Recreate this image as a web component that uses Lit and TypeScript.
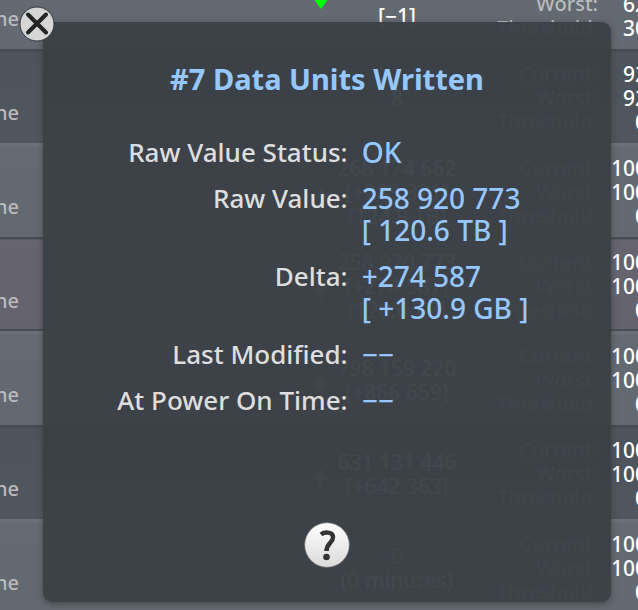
import { LitElement, html, svg, css, nothing } from "lit";
import { customElement, property } from "lit/decorators.js";

interface Attribute {
  tone: "light" | "dark" | "selected";
  raw: string[];
  trend?: "up" | "down";
  current: string;
  worst: string;
  threshold: string;
}

const ATTRIBUTES: Attribute[] = [
  { tone: "light", raw: ["36", "[−1]"], trend: "down", current: "64", worst: "62", threshold: "30" },
  { tone: "dark", raw: ["8"], current: "92", worst: "92", threshold: "0" },
  { tone: "light", raw: ["268 174 662", "[+283 321]", "(124.9 TB)"], trend: "up", current: "100", worst: "100", threshold: "0" },
  { tone: "selected", raw: ["258 920 773", "[+274 587]", "(120.6 TB)"], trend: "up", current: "100", worst: "100", threshold: "0" },
  { tone: "light", raw: ["798 159 220", "[+866 659]"], trend: "up", current: "100", worst: "100", threshold: "0" },
  { tone: "dark", raw: ["631 131 446", "[+642 363]"], trend: "up", current: "100", worst: "100", threshold: "0" },
  { tone: "light", raw: ["0", "(0 minutes)"], current: "100", worst: "100", threshold: "0" },
];

const DETAILS: { label: string; value: string[] }[] = [
  { label: "Raw Value Status:", value: ["OK"] },
  { label: "Raw Value:", value: ["258 920 773", "[ 120.6 TB ]"] },
  { label: "Delta:", value: ["+274 587", "[ +130.9 GB ]"] },
  { label: "Last Modified:", value: ["−−"] },
  { label: "At Power On Time:", value: ["−−"] },
];

@customElement("attribute-table")
export class AttributeTable extends LitElement {
  static styles = css`
    :host {
      display: block;
      color: #fff;
      font: 500 20px/24px "Noto Sans", "Open Sans", sans-serif;
    }
    table,
    tbody {
      display: block;
    }
    tr {
      display: grid;
      grid-template-columns: 19px 1fr 16px 136px 133px 49px;
      align-items: center;
      box-sizing: border-box;
      min-height: 94px;
      padding-top: 3px;
      margin-right: -9px;
    }
    td {
      padding: 0;
      white-space: nowrap;
    }
    .light {
      background: linear-gradient(#6b7177 0 3px, #646a71 4px, #636970);
    }
    .dark {
      background: linear-gradient(#474c53 0 2px, #4e545b 3px, #50565d);
    }
    .selected {
      background: linear-gradient(#484d54 0 2px, #66646f 3px, #64626d 92px, #484d54 92px);
    }
    .mode {
      display: flex;
      justify-content: flex-end;
      padding-top: 30px;
      color: #b9bbbc;
    }
    .trend {
      grid-column: 3;
      height: 30px;
      display: flex;
      color: #c0c0c0;
    }
    .trend.up {
      align-items: flex-end;
    }
    .trend.down {
      color: #00ff00;
    }
    .raw {
      text-align: center;
      font-size: 21px;
    }
    .labels {
      text-align: right;
      color: #b9bbbc;
    }
    .values {
      text-align: right;
      font-size: 21px;
    }
    .line {
      display: block;
    }
  `;

  private arrow(direction: "up" | "down") {
    const path = direction === "up" ? "M8 0L16 11H10V20H6V11H0Z" : "M8 20L16 9H10V0H6V9H0Z";
    return html`<svg width="16" height="20" viewBox="0 0 16 20" aria-label=${direction}>
      ${svg`<path d=${path} fill="currentColor" />`}
    </svg>`;
  }

  render() {
    return html`<table>
      <tbody>
        ${ATTRIBUTES.map(
          (a) => html`<tr class=${a.tone}>
            <td class="mode">Online</td>
            <td class="trend ${a.trend ?? ""}">${a.trend ? this.arrow(a.trend) : nothing}</td>
            <td class="raw">${a.raw.map((t) => html`<span class="line">${t}</span>`)}</td>
            <td class="labels">
              <span class="line">Current:</span><span class="line">Worst:</span
              ><span class="line">Threshold:</span>
            </td>
            <td class="values">
              <span class="line">${a.current}</span><span class="line">${a.worst}</span
              ><span class="line">${a.threshold}</span>
            </td>
          </tr>`
        )}
      </tbody>
    </table>`;
  }
}

@customElement("detail-popup")
export class DetailPopup extends LitElement {
  @property() heading = "";

  static styles = css`
    :host {
      display: flex;
      flex-direction: column;
      align-items: center;
      position: relative;
      box-sizing: border-box;
      padding: 41px 0 34px;
      border-radius: 9px;
      background: rgba(60, 65, 71, 0.97);
      box-shadow: 0 2px 6px rgba(50, 52, 54, 0.6);
      font: 500 26px/32px "Noto Sans", "Open Sans", sans-serif;
    }
    h1 {
      margin: 0 0 41px;
      font-size: 29px;
      line-height: 32px;
      font-weight: 700;
      color: #96c8ff;
    }
    dl {
      display: grid;
      grid-template-columns: 11fr 9fr;
      gap: 14px;
      width: 100%;
      margin: 0 0 106px;
    }
    dt {
      text-align: right;
      color: #dedede;
    }
    dd {
      margin: 0;
      font-size: 28px;
      color: #96c8ff;
      white-space: nowrap;
    }
    .line {
      display: block;
    }
    button {
      padding: 0;
      border: 0;
      background: none;
      border-radius: 50%;
      cursor: pointer;
    }
    button svg {
      display: block;
    }
    .close {
      position: absolute;
      top: -16px;
      left: -24px;
    }
  `;

  render() {
    return html`
      <button class="close" aria-label="Close">
        <svg width="36" height="36" viewBox="0 0 36 36">
          <circle cx="18" cy="18" r="17" fill="#d6d6d6" stroke="#34373a" stroke-width="1" />
          <path d="M9 8.500L27 26.500M27 8.500L9 26.500" stroke="#222426" stroke-width="4" stroke-linecap="round" />
        </svg>
      </button>
      <h1>${this.heading}</h1>
      <dl>
        ${DETAILS.map(
          (d) => html`<dt>${d.label}</dt>
            <dd>${d.value.map((v) => html`<span class="line">${v}</span>`)}</dd>`
        )}
      </dl>
      <button aria-label="Help">
        <svg width="46" height="46" viewBox="0 0 46 46">
          <defs>
            <linearGradient id="shine" x1="0" y1="0" x2="0" y2="1">
              <stop offset="0" stop-color="#ffffff" />
              <stop offset="1" stop-color="#dadada" />
            </linearGradient>
          </defs>
          <circle cx="23" cy="23" r="22.300" fill="url(#shine)" stroke="#777a7d" stroke-width="0.700" />
          <path d="M17 12.500C20 10 29 9 29 15.500C29 20.500 22.500 21.500 22.500 29" fill="none" stroke="#333435" stroke-width="4.500" />
          <circle cx="22.500" cy="35" r="3.300" fill="#333435" />
        </svg>
      </button>
    `;
  }
}

@customElement("app-root")
export class AppRoot extends LitElement {
  static styles = css`
    :host {
      display: grid;
      min-height: 100vh;
      overflow: hidden;
      background: #5b5d66;
    }
    .list,
    .popup {
      grid-area: 1 / 1;
      align-self: start;
    }
    .list {
      min-width: 0;
      margin: -45px 0;
    }
    .popup {
      margin: 22px 27px 8px 43px;
    }
  `;

  render() {
    return html`
      <attribute-table class="list"></attribute-table>
      <detail-popup class="popup" heading="#7 Data Units Written"></detail-popup>
    `;
  }
}
